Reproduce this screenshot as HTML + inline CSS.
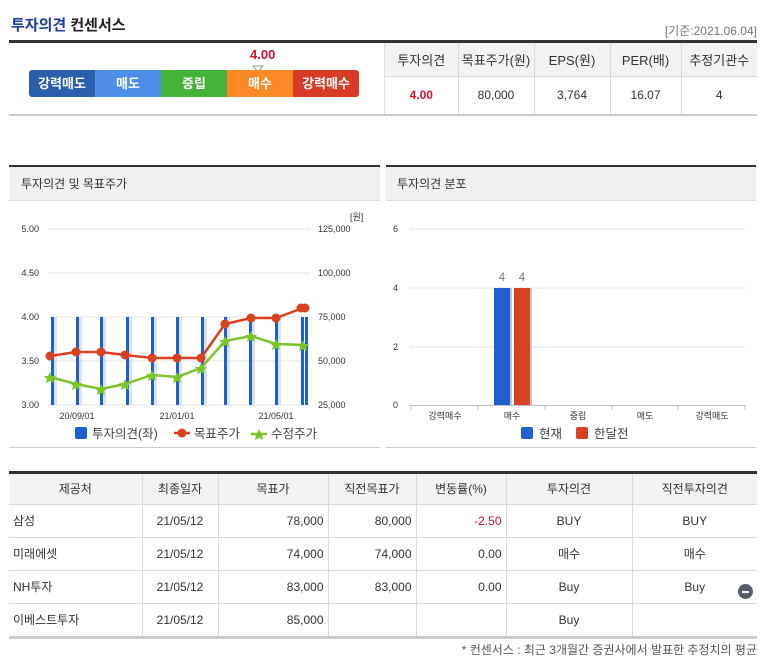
<!DOCTYPE html>
<html><head><meta charset="utf-8"><style>
*{margin:0;padding:0;box-sizing:border-box}
body{width:773px;height:668px;background:#fff;font-family:"Liberation Sans","Noto Sans CJK KR",sans-serif;position:relative;overflow:hidden;color:#333}
.a{position:absolute}
table{border-collapse:collapse;font-size:12px;color:#333}
td{border:1px solid #d9d9d9;text-align:center}
</style></head><body>
<div class="a" style="left:11px;top:14px;font-size:15px;font-weight:bold;color:#222"><span style="color:#1d3f9e">투자의견</span> 컨센서스</div>
<div class="a" style="right:16px;top:22px;font-size:12px;color:#777">[기준:2021.06.04]</div>
<div class="a" style="left:9px;top:40px;width:748px;height:3px;background:#333"></div>
<div class="a" style="left:9px;top:114px;width:748px;height:2px;background:#ccc"></div>
<div class="a" style="left:384px;top:43px;width:1px;height:71px;background:#ddd"></div>
<div class="a" style="left:250px;top:47px;font-size:13px;font-weight:bold;color:#d0112b">4.00</div>
<svg class="a" style="left:252px;top:65px" width="12" height="8"><path d="M1 1h10l-5 6z" fill="#fff" stroke="#999"/></svg>
<div class="a" style="left:29px;top:70px;width:330px;height:27px;border-radius:3px;overflow:hidden;display:flex;font-size:13px;font-weight:bold;color:#fff;line-height:27px;text-align:center">
<div style="width:66px;background:#2b5fae">강력매도</div><div style="width:66px;background:#4d8ee8">매도</div><div style="width:66px;background:#45b337">중립</div><div style="width:66px;background:#fb8a26">매수</div><div style="width:66px;background:#d93b26">강력매수</div></div>
<table class="a" style="left:385px;top:43px;width:372px">
<tr style="height:33px;background:#f2f2f2;font-size:13px"><td style="width:73px;border-left:none;border-top:none">투자의견</td><td style="width:76px;border-top:none">목표주가(원)</td><td style="width:76px;border-top:none">EPS(원)</td><td style="width:71px;border-top:none">PER(배)</td><td style="border-right:none;border-top:none">추정기관수</td></tr>
<tr style="height:38px"><td style="border-left:none;border-bottom:none;color:#d0112b;font-weight:bold">4.00</td><td style="border-bottom:none">80,000</td><td style="border-bottom:none">3,764</td><td style="border-bottom:none">16.07</td><td style="border-right:none;border-bottom:none">4</td></tr></table>

<div class="a" style="left:9px;top:165px;width:371px;height:2px;background:#333"></div>
<div class="a" style="left:9px;top:167px;width:371px;height:34px;background:#f0f0f0;border-bottom:1px solid #ddd;font-size:12px;line-height:34px;padding-left:12px">투자의견 및 목표주가</div>
<div class="a" style="left:9px;top:447px;width:371px;height:1px;background:#ccc"></div>
<svg class="a" style="left:0;top:200px" width="386" height="250" font-family="Liberation Sans,sans-serif" font-size="9" fill="#333">
<g stroke="#e4e4e4" stroke-width="1"><line x1="48" y1="29" x2="310" y2="29"/><line x1="48" y1="73" x2="310" y2="73"/><line x1="48" y1="117" x2="310" y2="117"/><line x1="48" y1="161" x2="310" y2="161"/><line x1="48" y1="205" x2="310" y2="205"/></g>
<g fill="#1f5fd0"><rect x="51" y="117" width="3" height="88"/><rect x="76" y="117" width="3" height="88"/><rect x="100" y="117" width="3" height="88"/><rect x="126" y="117" width="3" height="88"/><rect x="151" y="117" width="3" height="88"/><rect x="176" y="117" width="3" height="88"/><rect x="201" y="117" width="3" height="88"/><rect x="224" y="117" width="3" height="88"/><rect x="249" y="117" width="3" height="88"/><rect x="275" y="117" width="3" height="88"/><rect x="301" y="117" width="3" height="88"/><rect x="305" y="117" width="3" height="88"/></g>
<g fill="#c8d3e8" opacity=".6"><rect x="54" y="117" width="3" height="88"/><rect x="79" y="117" width="3" height="88"/><rect x="103" y="117" width="3" height="88"/><rect x="129" y="117" width="3" height="88"/><rect x="154" y="117" width="3" height="88"/><rect x="179" y="117" width="3" height="88"/><rect x="204" y="117" width="3" height="88"/><rect x="227" y="117" width="3" height="88"/><rect x="252" y="117" width="3" height="88"/><rect x="278" y="117" width="3" height="88"/></g>
<polyline fill="none" stroke="#7cc52a" stroke-width="2.5" points="50,177 76,184 101,189 125,184 152,175 177,177 201,168 225,141 251,136 276,144 303,145"/>
<g fill="#7cc52a">
<path d="M50 172l2 4h4l-3 3 1 4-4-2-4 2 1-4-3-3h4z"/><path d="M76 179l2 4h4l-3 3 1 4-4-2-4 2 1-4-3-3h4z"/><path d="M101 184l2 4h4l-3 3 1 4-4-2-4 2 1-4-3-3h4z"/><path d="M125 179l2 4h4l-3 3 1 4-4-2-4 2 1-4-3-3h4z"/><path d="M152 170l2 4h4l-3 3 1 4-4-2-4 2 1-4-3-3h4z"/><path d="M177 172l2 4h4l-3 3 1 4-4-2-4 2 1-4-3-3h4z"/><path d="M201 163l2 4h4l-3 3 1 4-4-2-4 2 1-4-3-3h4z"/><path d="M225 136l2 4h4l-3 3 1 4-4-2-4 2 1-4-3-3h4z"/><path d="M251 131l2 4h4l-3 3 1 4-4-2-4 2 1-4-3-3h4z"/><path d="M276 139l2 4h4l-3 3 1 4-4-2-4 2 1-4-3-3h4z"/><path d="M303 140l2 4h4l-3 3 1 4-4-2-4 2 1-4-3-3h4z"/></g>
<polyline fill="none" stroke="#d9401f" stroke-width="2.5" points="50,156 76,152 101,152 125,155 152,158 177,158 201,158 225,124 251,118 276,118 303,108"/>
<g fill="#d9401f"><circle cx="50" cy="156" r="4.5"/><circle cx="76" cy="152" r="4.5"/><circle cx="101" cy="152" r="4.5"/><circle cx="125" cy="155" r="4.5"/><circle cx="152" cy="158" r="4.5"/><circle cx="177" cy="158" r="4.5"/><circle cx="201" cy="158" r="4.5"/><circle cx="225" cy="124" r="4.5"/><circle cx="251" cy="118" r="4.5"/><circle cx="276" cy="118" r="4.5"/><circle cx="301" cy="108" r="4.5"/><circle cx="305" cy="108" r="4.5"/></g>
<g text-anchor="end"><text x="39" y="32">5.00</text><text x="39" y="76">4.50</text><text x="39" y="120">4.00</text><text x="39" y="164">3.50</text><text x="39" y="208">3.00</text></g>
<text x="318" y="32">125,000</text><text x="318" y="76">100,000</text><text x="318" y="120">75,000</text><text x="318" y="164">50,000</text><text x="318" y="208">25,000</text>
<text x="350" y="20">[원]</text>
<g text-anchor="middle"><text x="77" y="219">20/09/01</text><text x="177" y="219">21/01/01</text><text x="276" y="219">21/05/01</text></g>
<g font-size="12.5" fill="#444"><rect x="75" y="227" width="12" height="12" rx="2" fill="#1f5fd0"/><text x="92" y="238">투자의견(좌)</text>
<line x1="174" y1="233" x2="190" y2="233" stroke="#d9401f" stroke-width="2.5"/><circle cx="182" cy="233" r="4.5" fill="#d9401f"/><text x="194" y="238">목표주가</text>
<line x1="251" y1="234" x2="267" y2="234" stroke="#7cc52a" stroke-width="2.5"/><path d="M259 229l2 4h4l-3 3 1 4-4-2-4 2 1-4-3-3h4z" fill="#7cc52a"/><text x="271" y="238">수정주가</text></g>
</svg>

<div class="a" style="left:386px;top:165px;width:370px;height:2px;background:#333"></div>
<div class="a" style="left:386px;top:167px;width:370px;height:34px;background:#f0f0f0;border-bottom:1px solid #ddd;font-size:12px;line-height:34px;padding-left:11px">투자의견 분포</div>
<div class="a" style="left:386px;top:447px;width:370px;height:1px;background:#ccc"></div>
<svg class="a" style="left:386px;top:200px" width="387" height="250" font-family="Liberation Sans,sans-serif" font-size="9" fill="#333">
<g stroke="#e4e4e4"><line x1="24" y1="29" x2="359" y2="29"/><line x1="24" y1="88" x2="359" y2="88"/><line x1="24" y1="147" x2="359" y2="147"/></g>
<line x1="24" y1="205.5" x2="359" y2="205.5" stroke="#b9c0cc"/>
<g stroke="#b9c0cc"><line x1="25" y1="205" x2="25" y2="210"/><line x1="92" y1="205" x2="92" y2="210"/><line x1="159" y1="205" x2="159" y2="210"/><line x1="226" y1="205" x2="226" y2="210"/><line x1="292" y1="205" x2="292" y2="210"/><line x1="359" y1="205" x2="359" y2="210"/></g>
<rect x="110" y="88" width="16" height="117" fill="#c8c8c8"/><rect x="130" y="88" width="16" height="117" fill="#c8c8c8"/>
<rect x="108" y="88" width="16" height="117" fill="#1f5fd0"/><rect x="128" y="88" width="16" height="117" fill="#d9401f"/>
<text x="12" y="32" text-anchor="end">6</text><text x="12" y="91" text-anchor="end">4</text><text x="12" y="150" text-anchor="end">2</text><text x="12" y="208" text-anchor="end">0</text>
<g font-size="11.5" fill="#777" text-anchor="middle"><text x="116" y="81">4</text><text x="136" y="81">4</text></g>
<g text-anchor="middle"><text x="59" y="219">강력매수</text><text x="126" y="219">매수</text><text x="192" y="219">중립</text><text x="259" y="219">매도</text><text x="326" y="219">강력매도</text></g>
<g font-size="12.5" fill="#444"><rect x="135" y="227" width="12" height="12" rx="2" fill="#1f5fd0"/><text x="153" y="238">현재</text><rect x="190" y="227" width="12" height="12" rx="2" fill="#d9401f"/><text x="208" y="238">한달전</text></g>
</svg>

<div class="a" style="left:9px;top:471px;width:748px;height:3px;background:#333"></div>
<table class="a" style="left:9px;top:474px;width:748px">
<tr style="height:30px;background:#f2f2f2"><td style="width:133px;border-left:none;border-top:none">제공처</td><td style="width:76px;border-top:none">최종일자</td><td style="width:110px;border-top:none">목표가</td><td style="width:88px;border-top:none">직전목표가</td><td style="width:90px;border-top:none">변동률(%)</td><td style="width:126px;border-top:none">투자의견</td><td style="border-right:none;border-top:none">직전투자의견</td></tr>
<tr style="height:33px"><td style="border-left:none;text-align:left;padding-left:4px">삼성</td><td>21/05/12</td><td style="text-align:right;padding-right:4px">78,000</td><td style="text-align:right;padding-right:4px">80,000</td><td style="text-align:right;padding-right:4px;color:#d0112b">-2.50</td><td>BUY</td><td style="border-right:none">BUY</td></tr>
<tr style="height:33px"><td style="border-left:none;text-align:left;padding-left:4px">미래에셋</td><td>21/05/12</td><td style="text-align:right;padding-right:4px">74,000</td><td style="text-align:right;padding-right:4px">74,000</td><td style="text-align:right;padding-right:4px">0.00</td><td>매수</td><td style="border-right:none">매수</td></tr>
<tr style="height:33px"><td style="border-left:none;text-align:left;padding-left:4px">NH투자</td><td>21/05/12</td><td style="text-align:right;padding-right:4px">83,000</td><td style="text-align:right;padding-right:4px">83,000</td><td style="text-align:right;padding-right:4px">0.00</td><td>Buy</td><td style="border-right:none">Buy</td></tr>
<tr style="height:33px"><td style="border-left:none;border-bottom:none;text-align:left;padding-left:4px">이베스트투자</td><td style="border-bottom:none">21/05/12</td><td style="border-bottom:none;text-align:right;padding-right:4px">85,000</td><td style="border-bottom:none"></td><td style="border-bottom:none"></td><td style="border-bottom:none">Buy</td><td style="border-right:none;border-bottom:none"></td></tr>
</table>
<div class="a" style="left:9px;top:636px;width:748px;height:3px;background:#ccc"></div>
<div class="a" style="left:738px;top:584px;width:15px;height:15px;border-radius:50%;background:#555d6b"><div style="position:absolute;left:4px;top:6.5px;width:7px;height:2px;background:#fff"></div></div>
<div class="a" style="right:16px;top:641px;font-size:12px;color:#555">* 컨센서스 : 최근 3개월간 증권사에서 발표한 추정치의 평균</div>
</body></html>
